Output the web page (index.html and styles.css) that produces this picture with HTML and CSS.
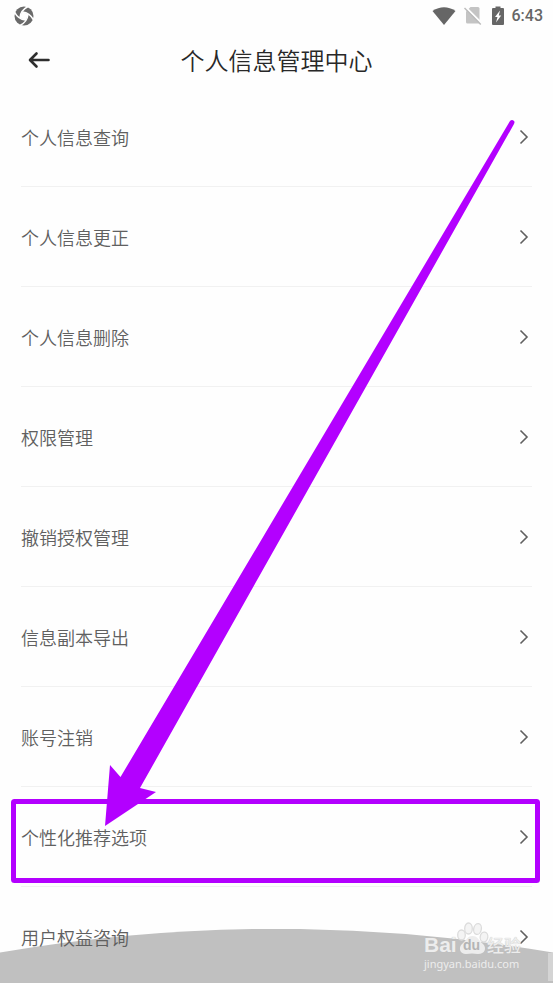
FILE: index.html
```html
<!DOCTYPE html>
<html lang="zh-CN">
<head>
<meta charset="utf-8">
<meta name="viewport" content="width=device-width, initial-scale=1">
<title>个人信息管理中心</title>
<link rel="stylesheet" href="styles.css">
</head>
<body>
<div class="screen">
  <svg class="dome" viewBox="0 0 553 54" preserveAspectRatio="none" aria-hidden="true">
    <path d="M0 54V23.500A1638 1638 0 0 1 553 23.500V54Z" fill="#c0c0c0"/>
    <path d="M548 24H553V52H548Z" fill="#d4d4d4"/>
  </svg>

  <div class="status">
    <svg class="status-app" width="20" height="20" viewBox="0 0 20 20" aria-hidden="true">
      <circle cx="10" cy="10" r="9.500" fill="#6a6a6a"/>
      <path d="M8.500 5.500L14.500 8.500L11.500 14.500L5.500 11.500Z" fill="#fff"/>
      <g fill="none" stroke="#fff" stroke-width="1.500">
        <path id="slit" d="M6 11.500C6.500 7 9 3 14 .5"/>
        <use href="#slit" transform="rotate(90 10 10)"/>
        <use href="#slit" transform="rotate(180 10 10)"/>
        <use href="#slit" transform="rotate(270 10 10)"/>
      </g>
    </svg>
    <div class="status-right">
      <svg width="24" height="20" viewBox="0 0 24 20" aria-hidden="true"><path d="M.5 5Q12-2.500 23.500 5L12 19Z" fill="#666"/></svg>
      <svg width="20" height="20" viewBox="0 0 20 20" aria-hidden="true"><path d="M6.500 1H14Q15.500 1 15.500 2.500V16.500Q15.500 17.500 14.500 17.500H3.500Q2 17.500 2 16V5.500Z" fill="#c4c4c4"/><path d="M1.500 1L18 17.500" stroke="#fefefe" stroke-width="1.800"/><path d="M.5 2L16.800 18.500" stroke="#bcbcbc" stroke-width="1.500"/></svg>
      <svg width="12" height="20" viewBox="0 0 12 20" aria-hidden="true"><path d="M3.500 .5H8.500V2H11Q12 2 12 3V18Q12 19 11 19H1Q0 19 0 18V3Q0 2 1 2H3.500Z" fill="#666"/><path d="M8 4.500L3 11H5.500L4 16.500L9.200 9.500H6.800Z" fill="#fff"/></svg>
      <span class="clock">6:43</span>
    </div>
  </div>

  <header class="header">
    <button class="back" type="button" aria-label="返回">
      <svg width="22" height="18" viewBox="0 0 22 18" aria-hidden="true"><path d="M8.500 2.500L2 9L8.500 15.500M2.500 9H20.500" fill="none" stroke="#2e2e2e" stroke-width="2.600" stroke-linecap="round" stroke-linejoin="round"/></svg>
    </button>
    <h1 class="title">个人信息管理中心</h1>
  </header>

  <svg class="symbols" aria-hidden="true"><symbol id="chevron" viewBox="0 0 10 16"><path d="M1.500 1.500L8 8L1.500 14.500" fill="none" stroke="#606060" stroke-width="1.600"/></symbol></svg>

  <nav class="list">
    <a class="row" href="#query">个人信息查询<svg class="chevron"><use href="#chevron"/></svg></a>
    <a class="row" href="#correct">个人信息更正<svg class="chevron"><use href="#chevron"/></svg></a>
    <a class="row" href="#delete">个人信息删除<svg class="chevron"><use href="#chevron"/></svg></a>
    <a class="row" href="#permission">权限管理<svg class="chevron"><use href="#chevron"/></svg></a>
    <a class="row" href="#revoke">撤销授权管理<svg class="chevron"><use href="#chevron"/></svg></a>
    <a class="row" href="#export">信息副本导出<svg class="chevron"><use href="#chevron"/></svg></a>
    <a class="row" href="#close">账号注销<svg class="chevron"><use href="#chevron"/></svg></a>
    <a class="row" href="#recommend">个性化推荐选项<svg class="chevron"><use href="#chevron"/></svg></a>
    <a class="row" href="#rights">用户权益咨询<svg class="chevron"><use href="#chevron"/></svg></a>
  </nav>

  <div class="watermark">
    <svg class="paw" width="32" height="34" viewBox="0 0 32 34" aria-hidden="true">
      <g fill="#d9d9d9" fill-opacity=".25" stroke="#dcdcdc" stroke-width="1.300">
        <ellipse cx="4.500" cy="13" rx="3.800" ry="5"/>
        <ellipse cx="11.500" cy="6.500" rx="3.800" ry="5.500"/>
        <ellipse cx="20.500" cy="7" rx="3.800" ry="5.500" transform="rotate(12 20.500 7)"/>
        <ellipse cx="27" cy="15" rx="3.800" ry="5" transform="rotate(10 27 15)"/>
      </g>
      <path d="M15.500 14C10 14 9 19 5 22C1 26 3 32 9 32Q15 31 21 32C28 32 30 26 26 22C22 19 21 14 15.500 14Z" fill="#ededed"/>
    </svg>
    <div class="brand"><span class="bai">Bai</span><span class="du">du</span><span class="jingyan">经验</span></div>
    <div class="site">jingyan.baidu.com</div>
  </div>

  <svg class="marks" viewBox="0 0 553 983" aria-hidden="true">
    <rect x="13.500" y="801.500" width="524" height="79" rx="1" fill="none" stroke="#b300ff" stroke-width="5"/>
    <path d="M105 826L110 765L120.500 777L510 121Q512 119 514 121Q515 122 514 124L140 788L156 792Z" fill="#b300ff"/>
  </svg>
</div>
</body>
</html>
```
FILE: styles.css
```css
* {
  box-sizing: border-box;
}

body {
  margin: 0;
  background: #fefefe;
  color: #606060;
  font-family: "Noto Sans CJK SC", sans-serif;
  font-weight: 350;
}

.screen {
  position: relative;
  isolation: isolate;
  height: 100vh;
  overflow: hidden;
}

.status {
  display: flex;
  align-items: center;
  justify-content: space-between;
  height: 32px;
  padding: 0 10px 0 14px;
}

.status-right {
  display: flex;
  align-items: center;
  gap: 8px;
}

.clock {
  font-family: Roboto, sans-serif;
  font-size: 16px;
  font-weight: 500;
  line-height: 20px;
  color: #666;
}

.header {
  display: grid;
  grid-template-columns: 40px 1fr 40px;
  align-items: center;
  height: 55px;
  padding: 0 20px;
}

.back {
  display: flex;
  align-items: center;
  width: 40px;
  height: 40px;
  padding: 0 8px;
  border: 0;
  background: none;
}

.title {
  margin: 0;
  font-size: 24px;
  font-weight: inherit;
  line-height: 32px;
  text-align: center;
  color: #282828;
}

.symbols {
  position: absolute;
  width: 0;
  height: 0;
}

.list {
  padding: 0 21px;
}

.row {
  display: flex;
  align-items: center;
  justify-content: space-between;
  height: 100px;
  padding-right: 3px;
  border-bottom: 1px solid #f1f1f1;
  font-size: 18px;
  line-height: 24px;
  color: inherit;
  text-decoration: none;
}

.chevron {
  width: 10px;
  height: 16px;
}

.dome {
  position: absolute;
  z-index: -1;
  bottom: 0;
  left: 0;
  width: 100%;
  height: 54px;
}

.watermark {
  position: absolute;
  right: 29px;
  bottom: 11px;
  width: 100px;
  color: #ededed;
}

.paw {
  position: absolute;
  left: 33px;
  bottom: 16px;
}

.brand {
  position: relative;
  display: flex;
  align-items: center;
  height: 22px;
  line-height: 22px;
  text-shadow: 0 0 1px #b8b8b8;
}

.bai {
  width: 39px;
  font-family: "Liberation Sans", sans-serif;
  font-size: 21px;
  font-weight: 700;
}

.du {
  width: 24px;
  font-family: "Liberation Sans", sans-serif;
  font-size: 14px;
  font-weight: 700;
  color: #b4b4b4;
  text-shadow: none;
}

.jingyan {
  font-size: 17px;
  font-weight: 500;
  white-space: nowrap;
}

.site {
  font-family: "Noto Sans", sans-serif;
  font-size: 11px;
  font-weight: 400;
  line-height: 16px;
}

.marks {
  position: absolute;
  top: 0;
  left: 0;
  width: 100%;
  pointer-events: none;
}
```
